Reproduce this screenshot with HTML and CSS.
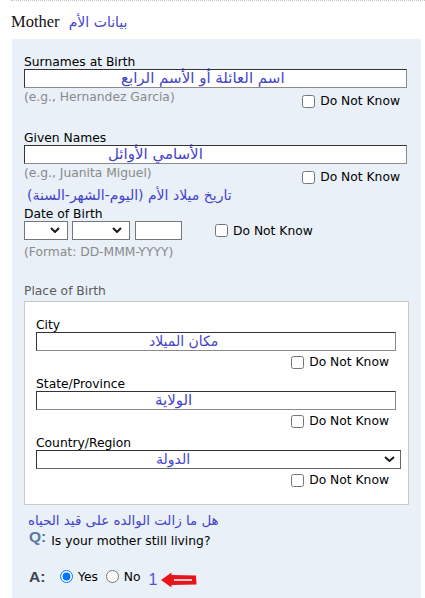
FILE: index.html
```html
<!DOCTYPE html>
<html lang="en">
<head>
<meta charset="utf-8">
<title>Mother</title>
<link rel="stylesheet" href="styles.css">
</head>
<body>
<div class="page">
  <h2 class="title">Mother <span class="ar ar-title">بيانات الأم</span></h2>
  <div class="panel">
    <div class="field">
      <div class="label">Surnames at Birth</div>
      <div class="textbox wide"><span class="ar ar-in ar-surname">اسم العائلة أو الأسم الرابع</span></div>
      <div class="row wide">
        <span class="hint">(e.g., Hernandez Garcia)</span>
        <label class="dnk"><input type="checkbox">Do Not Know</label>
      </div>
    </div>
    <div class="field">
      <div class="label">Given Names</div>
      <div class="textbox wide"><span class="ar ar-in ar-given">الأسامي الأوائل</span></div>
      <div class="row wide">
        <span class="hint">(e.g., Juanita Miguel)</span>
        <label class="dnk"><input type="checkbox">Do Not Know</label>
      </div>
    </div>
    <div class="ar ar-date">تاريخ ميلاد الأم (اليوم-الشهر-السنة)</div>
    <div class="label">Date of Birth</div>
    <div class="dob">
      <div class="select sel-day"><svg class="chev" width="10" height="6" viewBox="0 0 10 6"><path d="M1 1 L5 5 L9 1" fill="none" stroke="#1a1a1a" stroke-width="2"/></svg></div>
      <div class="select sel-month"><svg class="chev" width="10" height="6" viewBox="0 0 10 6"><path d="M1 1 L5 5 L9 1" fill="none" stroke="#1a1a1a" stroke-width="2"/></svg></div>
      <div class="yearbox"></div>
      <label class="dnk dnk-dob"><input type="checkbox">Do Not Know</label>
    </div>
    <div class="hint fmt">(Format: DD-MMM-YYYY)</div>

    <div class="label pob">Place of Birth</div>
    <div class="box">
      <div class="subfield">
        <div class="label">City</div>
        <div class="textbox narrow"><span class="ar ar-in ar-city">مكان الميلاد</span></div>
        <div class="row narrow end"><label class="dnk dnk-sub"><input type="checkbox">Do Not Know</label></div>
      </div>
      <div class="subfield">
        <div class="label">State/Province</div>
        <div class="textbox narrow"><span class="ar ar-in ar-state">الولاية</span></div>
        <div class="row narrow end"><label class="dnk dnk-sub"><input type="checkbox">Do Not Know</label></div>
      </div>
      <div class="subfield last">
        <div class="label">Country/Region</div>
        <div class="select country"><span class="ar ar-in ar-country">الدولة</span><svg class="chev" width="11" height="6" viewBox="0 0 11 6"><path d="M1 1 L5.5 5 L10 1" fill="none" stroke="#1a1a1a" stroke-width="2"/></svg></div>
        <div class="row narrow end"><label class="dnk dnk-sub"><input type="checkbox">Do Not Know</label></div>
      </div>
    </div>

    <div class="ar ar-question">هل ما زالت الوالده على قيد الحياه</div>
    <div class="question">
      <span class="q">Q:</span>
      <span class="qtext">Is your mother still living?</span>
    </div>
    <div class="answer">
      <span class="a">A:</span>
      <input class="radio r-yes" type="radio" name="living" checked>
      <span class="opt">Yes</span>
      <input class="radio r-no" type="radio" name="living">
      <span class="opt">No</span>
      <span class="num">1</span>
      <svg class="arrow" width="36" height="16" viewBox="0 0 36 16"><polygon points="0,8 10.5,0.5 10.5,3 35,3.5 35.5,12.5 10.5,13 10.5,15.5" fill="#e8141b"/><line x1="13" y1="8" x2="31" y2="8" stroke="#ffffff" stroke-width="1.5"/></svg>
    </div>
  </div>
</div>
</body>
</html>
```

FILE: styles.css
```css
* { box-sizing: border-box; }

body {
  margin: 0;
  background: #ffffff;
  color: #000000;
  font-family: "DejaVu Sans", Verdana, sans-serif;
  font-size: 12.3px;
  line-height: 14px;
}

.page {
  margin-left: 11px;
  border-top: 1px dotted #c4c4c4;
}

.title {
  margin: 11px 0 7px;
  font: normal 16.5px/20px "Liberation Serif", "Times New Roman", serif;
  color: #111;
}

.ar {
  font-family: "DejaVu Sans", sans-serif;
  color: #4343c9;
}

.ar-title {
  font-size: 14px;
  margin-left: 5px;
}

.panel {
  margin: 0 4px 0 1px;
  background: #e9f0f7;
  padding: 16px 12px 30px;
}

.field { margin-bottom: 23px; }
.field + .field { margin-bottom: 0; }

.label { height: 14px; }

.textbox {
  height: 19px;
  background: #fff;
  border: 1px solid;
  border-color: #333 #8a8a8a #8a8a8a #333;
  display: flex;
  align-items: center;
}

.wide { width: 383px; }
.narrow { width: 360px; }

.ar-in {
  font-size: 14px;
  line-height: 17px;
  white-space: nowrap;
}
.ar-surname { font-size: 15px; margin-left: 96px; }
.ar-given { font-size: 15px; margin-left: 83px; }
.ar-city { margin-left: 112px; }
.ar-state { font-size: 15px; margin-left: 118px; }
.ar-country { margin-left: 119px; }

.row {
  display: flex;
  justify-content: space-between;
  align-items: flex-start;
}
.row.end { justify-content: flex-end; }

.hint { color: #8a8a8a; }
.row .hint { padding-top: 2px; }

.dnk {
  display: inline-flex;
  align-items: center;
  margin-top: 6px;
  margin-right: 7px;
}
.dnk input {
  width: 13px;
  height: 13px;
  margin: 0 5px 0 0;
}

.ar-date {
  font-size: 14px;
  line-height: 23px;
  height: 23px;
  padding-left: 3px;
}

.dob {
  display: flex;
  align-items: center;
  height: 19px;
}

.select {
  height: 19px;
  background: #fff;
  border: 1px solid #767676;
  display: flex;
  align-items: center;
  justify-content: flex-end;
}
.sel-day { width: 44px; padding-right: 7px; margin-right: 4px; }
.sel-month { width: 58px; padding-right: 7px; margin-right: 5px; }
.chev { display: block; margin-top: -2px; }

.yearbox {
  width: 47px;
  height: 19px;
  background: #fff;
  border: 1px solid #767676;
}

.dnk-dob {
  margin: 0 0 0 33px;
}

.fmt { margin-top: 5px; }

.pob {
  margin-top: 25px;
  color: #5b5b5b;
}

.box {
  margin-top: 3px;
  width: 385px;
  background: #fff;
  border: 1px solid #c9c9c9;
  padding: 16px 11px 17px;
}

.subfield { margin-bottom: 8px; }
.subfield.last { margin-bottom: 0; }

.dnk-sub { margin-top: 4px; }

.select.country {
  width: 365px;
  border-color: #333 #666 #666 #333;
  justify-content: space-between;
  padding-right: 5px;
}

.ar-question {
  margin-top: 8px;
  padding-left: 4px;
  font-size: 13.4px;
  line-height: 16px;
  height: 16px;
}

.question {
  display: flex;
  align-items: flex-start;
  padding-left: 5px;
}
.q {
  font: bold 15.5px/16px "Liberation Sans", Arial, sans-serif;
  color: #5a77a6;
}
.qtext {
  padding-top: 5px;
  margin-left: 5px;
}

.answer {
  display: flex;
  align-items: center;
  height: 20px;
  margin-top: 19px;
  padding-left: 5px;
}
.a {
  font: bold 15.5px/16px "Liberation Sans", Arial, sans-serif;
  color: #3c4350;
  width: 17px;
}
.radio {
  width: 13px;
  height: 13px;
  margin: 0 5px 2px 0;
}
.r-yes { margin-left: 14px; }
.r-no { margin-left: 8px; }
.num {
  font: 16px/18px "Liberation Sans", Arial, sans-serif;
  color: #5a4fcf;
  margin-left: 8px;
  margin-top: 5px;
}
.arrow {
  display: block;
  margin-left: 3px;
  margin-top: 6px;
}
```
